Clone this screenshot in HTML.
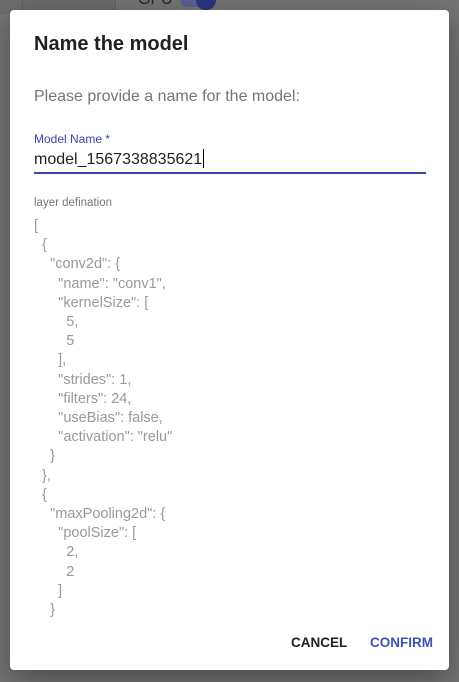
<!DOCTYPE html>
<html><head><style>
body{margin:0;width:459px;height:682px;background:#747474;position:relative;overflow:hidden;font-family:"Liberation Sans",sans-serif}
.bg1{position:absolute;left:22px;top:0;width:92px;height:14px;background:#6a6a6a;border-left:1px solid #5e5e5e;border-right:1px solid #5e5e5e}
.bg2{position:absolute;left:0;top:0;width:22px;height:14px;background:#6c6c6c}
.gpu{position:absolute;left:138px;top:-9px;color:#222;font-size:16px}
.tog{position:absolute;left:181px;top:-4px;width:28px;height:11px;border-radius:6px;background:#5a5f90}
.knob{position:absolute;left:196px;top:-10px;width:20px;height:20px;border-radius:50%;background:#2a3580}
.dlg{position:absolute;left:10px;top:10px;width:439px;height:660px;background:#fff;border-radius:4px;box-shadow:0 10px 30px rgba(0,0,0,.35)}
h1{position:absolute;left:24px;top:23px;margin:0;font-size:20px;font-weight:bold;color:#212121}
.p{position:absolute;left:24px;top:78px;font-size:16px;color:#757575}
.lbl{position:absolute;left:24px;top:122px;font-size:12px;color:#3646a8}
.inp{position:absolute;left:24px;top:139px;font-size:16px;color:#212121}
.cur{display:inline-block;width:1px;height:19px;background:#000;vertical-align:-4px;margin-left:1px}
.line{position:absolute;left:24px;top:162px;width:392px;height:2px;background:#3646a8}
.ld{position:absolute;left:24px;top:187px;font-size:11.5px;color:#757575}
pre{position:absolute;left:24px;top:207px;margin:0;font-family:"Liberation Sans",sans-serif;font-size:14.5px;line-height:19.2px;color:#999}
.btn{position:absolute;top:635px;font-size:13.5px;font-weight:bold;letter-spacing:0}
</style></head><body>
<div class="bg2"></div><div class="bg1"></div>
<div class="gpu">GPU</div><div class="tog"></div><div class="knob"></div>
<div class="dlg">
<h1>Name the model</h1>
<div class="p">Please provide a name for the model:</div>
<div class="lbl">Model Name *</div>
<div class="inp">model_1567338835621<span class="cur"></span></div>
<div class="line"></div>
<div class="ld">layer defination</div>
<pre>[
  {
    "conv2d": {
      "name": "conv1",
      "kernelSize": [
        5,
        5
      ],
      "strides": 1,
      "filters": 24,
      "useBias": false,
      "activation": "relu"
    }
  },
  {
    "maxPooling2d": {
      "poolSize": [
        2,
        2
      ]
    }</pre>
</div>
<div class="btn" style="left:291px;color:#212121">CANCEL</div>
<div class="btn" style="left:370px;color:#3f51b5">CONFIRM</div>
</body></html>
